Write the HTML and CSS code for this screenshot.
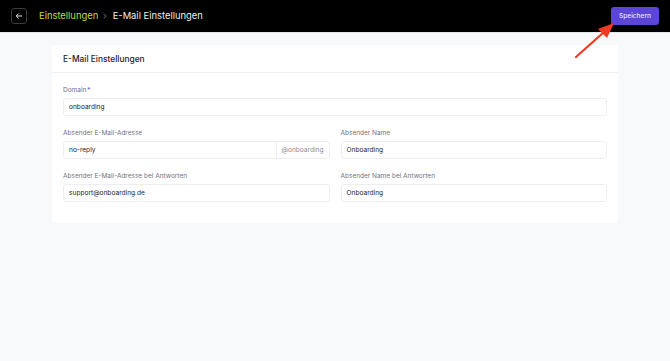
FILE: index.html
```html
<!DOCTYPE html>
<html lang="de">
<head>
    <meta charset="UTF-8">
    <meta name="viewport" content="width=device-width, initial-scale=1.0">
    <title>E-Mail Einstellungen</title>
    <link rel="stylesheet" href="styles.css">
</head>
<body>
    <header class="topbar">
        <div class="crumbs">
            <button class="back" type="button">
                <svg width="8" height="8" viewBox="0 0 8 8"><path d="M7 4H1.2M3.6 1.6L1.2 4l2.4 2.4" fill="none" stroke="#e5e5e5" stroke-width="1"/></svg>
            </button>
            <span class="crumb-link">Einstellungen</span>
            <span class="crumb-sep">&rsaquo;</span>
            <span class="crumb-current">E-Mail Einstellungen</span>
        </div>
        <button class="save" type="button">Speichern</button>
    </header>

    <main class="page">
        <section class="card">
            <h2 class="card-title">E-Mail Einstellungen</h2>
            <div class="card-body">
                <div class="field">
                    <label>Domain<span class="req">*</span></label>
                    <div class="input">onboarding</div>
                </div>
                <div class="row">
                    <div class="field">
                        <label>Absender E-Mail-Adresse</label>
                        <div class="input group">
                            <span class="group-value">no-reply</span>
                            <span class="addon">@onboarding</span>
                        </div>
                    </div>
                    <div class="field">
                        <label>Absender Name</label>
                        <div class="input">Onboarding</div>
                    </div>
                </div>
                <div class="row">
                    <div class="field">
                        <label>Absender E-Mail-Adresse bei Antworten</label>
                        <div class="input">support@onboarding.de</div>
                    </div>
                    <div class="field">
                        <label>Absender Name bei Antworten</label>
                        <div class="input">Onboarding</div>
                    </div>
                </div>
            </div>
        </section>
    </main>

    <svg class="pointer" width="670" height="361" viewBox="0 0 670 361">
        <line x1="576" y1="57" x2="604" y2="32" stroke="#f03a24" stroke-width="2.2" stroke-linecap="round"/>
        <polygon points="614,23 598,29 607,38" fill="#f03a24"/>
    </svg>
</body>
</html>
```

FILE: styles.css
```css
* {
    box-sizing: border-box;
}
body {
    margin: 0;
    font-family: Inter, "Liberation Sans", sans-serif;
    background-color: #f8f9fb;
    color: #1f2328;
}
.topbar {
    height: 33px;
    background-color: #000;
    border-bottom: 1px solid #e6e8ec;
    display: flex;
    align-items: center;
    justify-content: space-between;
    padding: 0 11px 1px 11px;
}
.crumbs {
    display: flex;
    align-items: center;
}
.back {
    width: 16px;
    height: 16px;
    padding: 0;
    background: #000;
    border: 1px solid #3a3a3f;
    border-radius: 3px;
    display: flex;
    align-items: center;
    justify-content: center;
    margin-right: 12px;
}
.back svg {
    display: block;
}
.crumb-link {
    color: #c4dc3e;
    font-size: 9.4px;
}
.crumb-sep {
    color: #77777d;
    font-size: 9px;
    margin: 0 6px 0 5px;
}
.crumb-current {
    color: #ededed;
    font-size: 9.4px;
}
.save {
    width: 48px;
    height: 18px;
    padding: 0;
    border: none;
    border-radius: 3px;
    background-color: #5c46d8;
    color: #e6e2ff;
    font-family: inherit;
    font-size: 6.6px;
    font-weight: 500;
}
.page {
    padding: 12px 52px;
}
.card {
    background-color: #fff;
    border-radius: 3px;
}
.card-title {
    margin: 0;
    height: 28px;
    display: flex;
    align-items: center;
    padding: 0 11px;
    font-size: 8.4px;
    font-weight: 500;
    color: #23262b;
    border-bottom: 1px solid #f0f1f4;
}
.card-body {
    padding: 12px 11px 21px;
    display: flex;
    flex-direction: column;
    gap: 12px;
}
.row {
    display: grid;
    grid-template-columns: 1fr 1fr;
    gap: 11px;
}
.field label {
    display: block;
    height: 10px;
    line-height: 10px;
    margin-bottom: 3px;
    font-size: 6.5px;
    color: #70747d;
}
.req {
    color: #6a55e0;
    margin-left: 1px;
}
.input {
    height: 18px;
    border: 1px solid #eceef1;
    border-radius: 3px;
    display: flex;
    align-items: center;
    padding: 0 5px;
    font-size: 6.6px;
    color: #1d2025;
    background-color: #fff;
}
.input.group {
    padding: 0;
}
.group-value {
    flex: 1;
    padding: 0 5px;
}
.addon {
    height: 100%;
    display: flex;
    align-items: center;
    padding: 0 5px;
    border-left: 1px solid #eceef1;
    color: #8a8e96;
}
.pointer {
    position: absolute;
    left: 0;
    top: 0;
    pointer-events: none;
}
```
